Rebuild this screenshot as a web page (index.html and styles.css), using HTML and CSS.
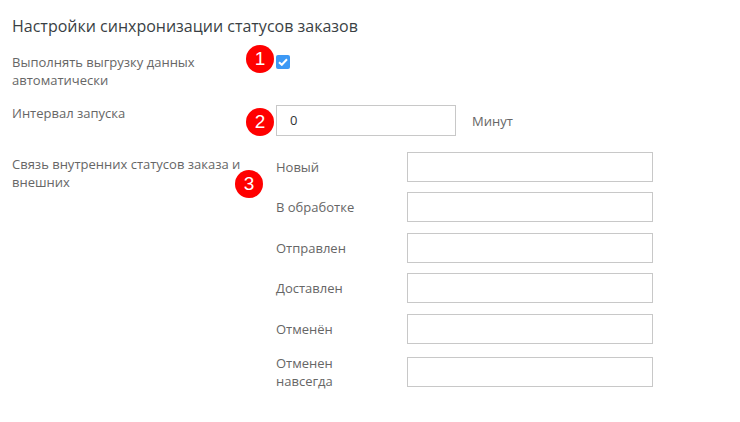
FILE: index.html
```html
<!DOCTYPE html>
<html lang="ru">
<head>
<meta charset="utf-8">
<title>Настройки синхронизации</title>
<link rel="stylesheet" href="styles.css">
</head>
<body>
<div class="page">
  <h1 class="title">Настройки синхронизации статусов заказов</h1>
  <div class="form">
    <div class="row row-check">
      <div class="label">Выполнять выгрузку данных автоматически</div>
      <div class="field"><span class="checkbox"><svg width="10" height="8" viewBox="0 0 10 8"><path d="M1 4.2 L3.8 6.8 L9 1.2" fill="none" stroke="#fff" stroke-width="2"/></svg></span></div>
    </div>
    <div class="row row-interval">
      <div class="label">Интервал запуска</div>
      <div class="field field-inline">
        <div class="input input-interval">0</div>
        <span class="unit">Минут</span>
      </div>
    </div>
    <div class="row row-map">
      <div class="label">Связь внутренних статусов заказа и внешних</div>
      <div class="map">
        <div class="map-row"><div class="map-label">Новый</div><div class="input input-map"></div></div>
        <div class="map-row"><div class="map-label">В обработке</div><div class="input input-map"></div></div>
        <div class="map-row"><div class="map-label">Отправлен</div><div class="input input-map"></div></div>
        <div class="map-row"><div class="map-label">Доставлен</div><div class="input input-map"></div></div>
        <div class="map-row"><div class="map-label">Отменён</div><div class="input input-map"></div></div>
        <div class="map-row"><div class="map-label">Отменен<br>навсегда</div><div class="input input-map"></div></div>
      </div>
    </div>
  </div>
  <span class="badge badge-1">1</span>
  <span class="badge badge-2">2</span>
  <span class="badge badge-3">3</span>
</div>
</body>
</html>
```

FILE: styles.css
```css
* { box-sizing: border-box; }
html, body { margin: 0; padding: 0; background: #fff; }
body {
  font-family: "Open Sans", "Noto Sans", sans-serif;
  color: #666;
}
.page {
  position: relative;
  width: 740px;
  height: 422px;
  padding: 15px 12px 0 12px;
}
.title {
  margin: 0;
  font-size: 16px;
  font-weight: 400;
  line-height: 22px;
  color: #3a3f44;
}
.form {
  display: flex;
  flex-direction: column;
  margin-top: 16px;
}
.row {
  display: grid;
  grid-template-columns: 264px 1fr;
}
.label {
  font-size: 13px;
  line-height: 18px;
  color: #666;
  padding-right: 8px;
}
.row-check .field { padding-top: 2px; }
.checkbox {
  display: flex;
  align-items: center;
  justify-content: center;
  width: 14px;
  height: 14px;
  border-radius: 2px;
  background: #3d99f5;
}
.row-interval { margin-top: 15px; }
.field-inline {
  display: flex;
  align-items: center;
  gap: 16px;
  align-self: start;
  margin-top: 1px;
}
.input {
  border: 1px solid #c8c8c8;
  background: #fff;
  font-size: 13px;
  color: #333;
}
.input-interval {
  width: 180px;
  height: 31px;
  line-height: 29px;
  padding-left: 13px;
}
.unit { font-size: 13px; color: #666; }
.row-map { margin-top: 19px; }
.map {
  display: flex;
  flex-direction: column;
  gap: 10.4px;
  margin-top: -3px;
}
.map-row {
  display: grid;
  grid-template-columns: 131px 246px;
  align-items: center;
}
.map-label { font-size: 13px; line-height: 18px; color: #666; }
.input-map { height: 30px; }
.badge {
  position: absolute;
  width: 28px;
  height: 28px;
  border-radius: 50%;
  background: #f00;
  color: #fff;
  font-family: "Liberation Sans", Arial, sans-serif;
  font-size: 19px;
  line-height: 28px;
  text-align: center;
}
.badge-1 { left: 246px; top: 45px; }
.badge-2 { left: 246px; top: 108px; }
.badge-3 { left: 235px; top: 170px; }
```
